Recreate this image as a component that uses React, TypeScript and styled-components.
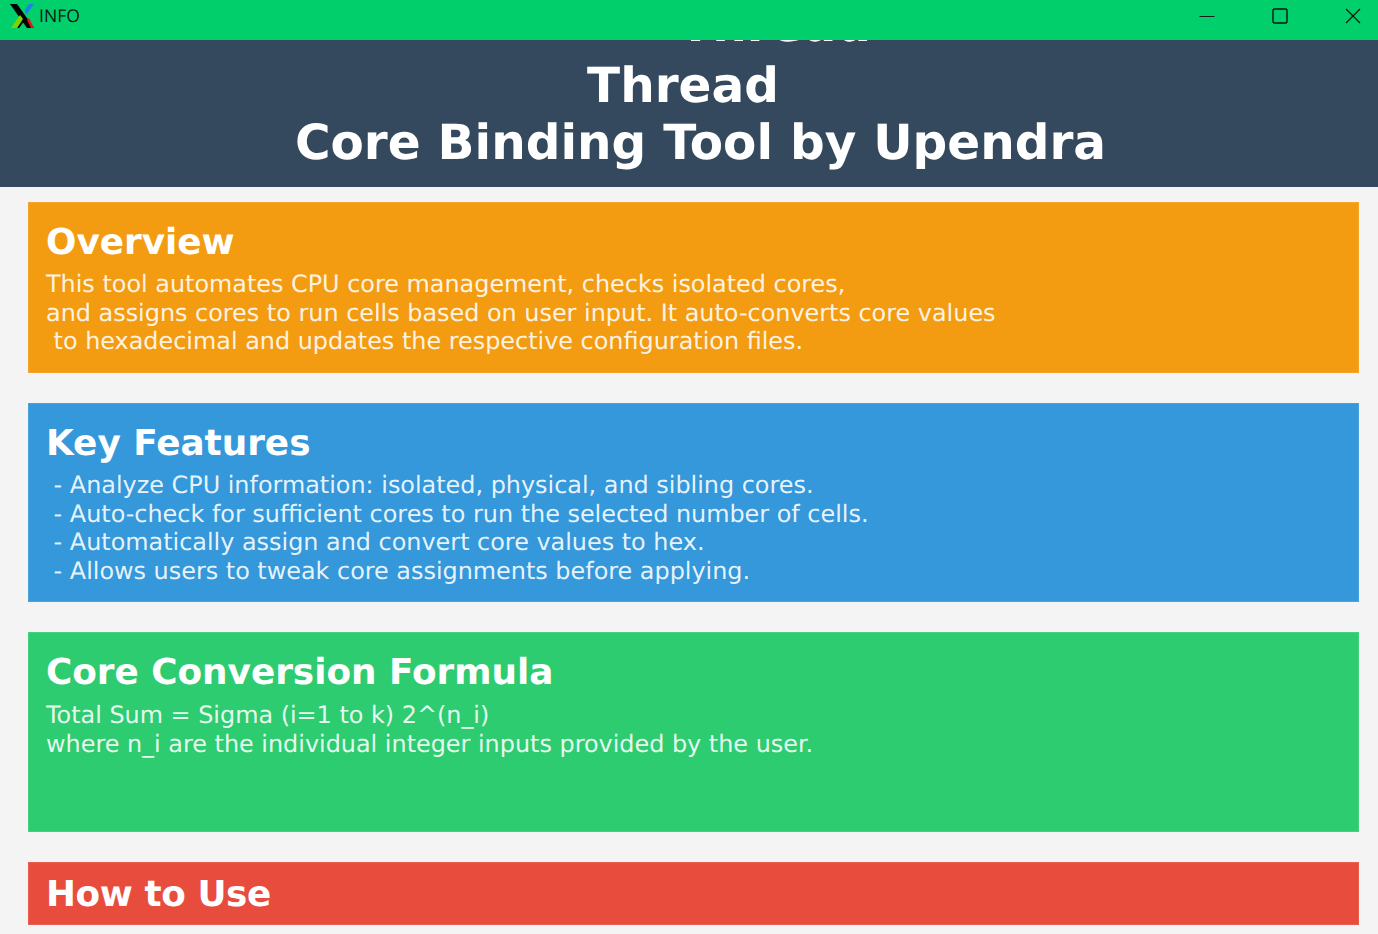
import React from 'react';
import styled, { createGlobalStyle } from 'styled-components';

const GlobalStyle = createGlobalStyle`
  html, body {
    margin: 0;
    padding: 0;
    height: 100%;
    overflow: hidden;
    background: #f4f4f4;
  }
`;

const Window = styled.div`
  display: flex;
  flex-direction: column;
  width: 1378px;
  height: 934px;
  overflow: hidden;
  background: #f4f4f4;
  font-family: "DejaVu Sans", sans-serif;
  text-rendering: geometricPrecision;
`;

const TitleBar = styled.div`
  display: flex;
  flex: 0 0 40px;
  align-items: center;
  justify-content: space-between;
  height: 40px;
  padding-bottom: 8px;
  box-sizing: border-box;
  background: #00cf6b;
`;

const TitleLeft = styled.div`
  display: flex;
  align-items: center;
  gap: 4px;
  padding-left: 10px;
`;

const WindowTitle = styled.span`
  font-family: "Open Sans", "Liberation Sans", sans-serif;
  font-size: 17.6px;
  color: #0c1a12;
`;

const Controls = styled.div`
  display: flex;
  align-items: center;
  gap: 57px;
  padding-right: 17px;
`;

const Banner = styled.header`
  display: flex;
  flex: 0 0 147px;
  flex-direction: column;
  justify-content: flex-end;
  align-items: center;
  height: 147px;
  padding-bottom: 16px;
  box-sizing: border-box;
  overflow: hidden;
  background: #34495e;
`;

// the lines are not centred on the same axis in the reference
const BannerLine = styled.div<{ $left?: number; $right?: number; $below?: number }>`
  flex: none;
  margin: 0 ${(p) => p.$right ?? 0}px ${(p) => p.$below ?? 0}px ${(p) => p.$left ?? 0}px;
  font-size: 48.5px;
  font-weight: 700;
  line-height: 56.5px;
  white-space: pre;
  color: #ffffff;
`;

const Content = styled.main`
  display: flex;
  flex-direction: column;
  gap: 30px;
  padding: 15px 19px 0 28px;
`;

const Card = styled.section<{ $bg: string; $height: number; $top: number }>`
  flex: 0 0 ${(p) => p.$height}px;
  height: ${(p) => p.$height}px;
  padding: ${(p) => p.$top}px 18px 0;
  box-sizing: border-box;
  overflow: hidden;
  background: ${(p) => p.$bg};
  box-shadow: inset 0 0 0 1px rgba(255, 255, 255, 0.1);
  color: #ffffff;
`;

const CardTitle = styled.h2<{ $gap: number; $tracking?: number }>`
  margin: 0 0 ${(p) => p.$gap}px;
  font-size: 35.8px;
  font-weight: 700;
  line-height: 48px;
  letter-spacing: ${(p) => p.$tracking ?? 0}px;
`;

const CardBody = styled.p`
  margin: 0;
  font-size: 23.9px;
  line-height: 28.6px;
  white-space: pre;
  color: rgba(255, 255, 255, 0.9);
`;

const XLogo = () => (
  <svg width="25" height="28" viewBox="0 0 25 28">
    <path d="M0 2h7l17 24h-7z" fill="#000" />
    <path d="M13 16l2 2-6 8H7z" fill="#000" />
    <path d="M1 26l9-13 3 4-6 9z" fill="#7fd400" />
    <path d="M15 8l4-6h5l-8 11z" fill="#1e7ff0" />
    <path d="M17 18l2-2 5 10h-3z" fill="#e01818" />
  </svg>
);

const MinimizeIcon = () => (
  <svg width="16" height="16" viewBox="0 0 16 16" fill="none" stroke="#0c1a12" strokeWidth="1">
    <path d="M0.5 8.5h15" />
  </svg>
);

const MaximizeIcon = () => (
  <svg width="16" height="16" viewBox="0 0 16 16" fill="none" stroke="#0c1a12" strokeWidth="1.4">
    <rect x="1" y="1" width="14" height="14" rx="1.5" />
  </svg>
);

const CloseIcon = () => (
  <svg width="16" height="16" viewBox="0 0 16 16" fill="none" stroke="#0c1a12" strokeWidth="1.3">
    <path d="M1 1l14 14M15 1L1 15" />
  </svg>
);

const cards = [
  {
    title: 'Overview',
    bg: '#f39c12',
    height: 171,
    top: 17,
    gap: 3,
    body: 'This tool automates CPU core management, checks isolated cores,\nand assigns cores to run cells based on user input. It auto-converts core values\n to hexadecimal and updates the respective configuration files.',
  },
  {
    title: 'Key Features',
    bg: '#3498db',
    height: 199,
    top: 17,
    gap: 3,
    body: ' - Analyze CPU information: isolated, physical, and sibling cores.\n - Auto-check for sufficient cores to run the selected number of cells.\n - Automatically assign and convert core values to hex.\n - Allows users to tweak core assignments before applying.',
  },
  {
    title: 'Core Conversion Formula',
    bg: '#2ecc71',
    height: 200,
    top: 17,
    gap: 4,
    body: 'Total Sum = Sigma (i=1 to k) 2^(n_i)\nwhere n_i are the individual integer inputs provided by the user.',
  },
  { title: 'How to Use', bg: '#e74c3c', height: 63, top: 9, gap: 0, tracking: -0.4, body: '' },
];

const App: React.FC = () => (
  <Window>
    <GlobalStyle />
    <TitleBar>
      <TitleLeft>
        <XLogo />
        <WindowTitle>INFO</WindowTitle>
      </TitleLeft>
      <Controls>
        <MinimizeIcon />
        <MaximizeIcon />
        <CloseIcon />
      </Controls>
    </TitleBar>
    <Banner>
      <BannerLine $left={172} $below={4.75}>Thread</BannerLine>
      <BannerLine $right={12}>Thread</BannerLine>
      <BannerLine $left={23}>Core Binding Tool by Upendra</BannerLine>
    </Banner>
    <Content>
      {cards.map((card) => (
        <Card key={card.title} $bg={card.bg} $height={card.height} $top={card.top}>
          <CardTitle $gap={card.gap} $tracking={card.tracking}>{card.title}</CardTitle>
          {card.body && <CardBody>{card.body}</CardBody>}
        </Card>
      ))}
    </Content>
  </Window>
);

export default App;
